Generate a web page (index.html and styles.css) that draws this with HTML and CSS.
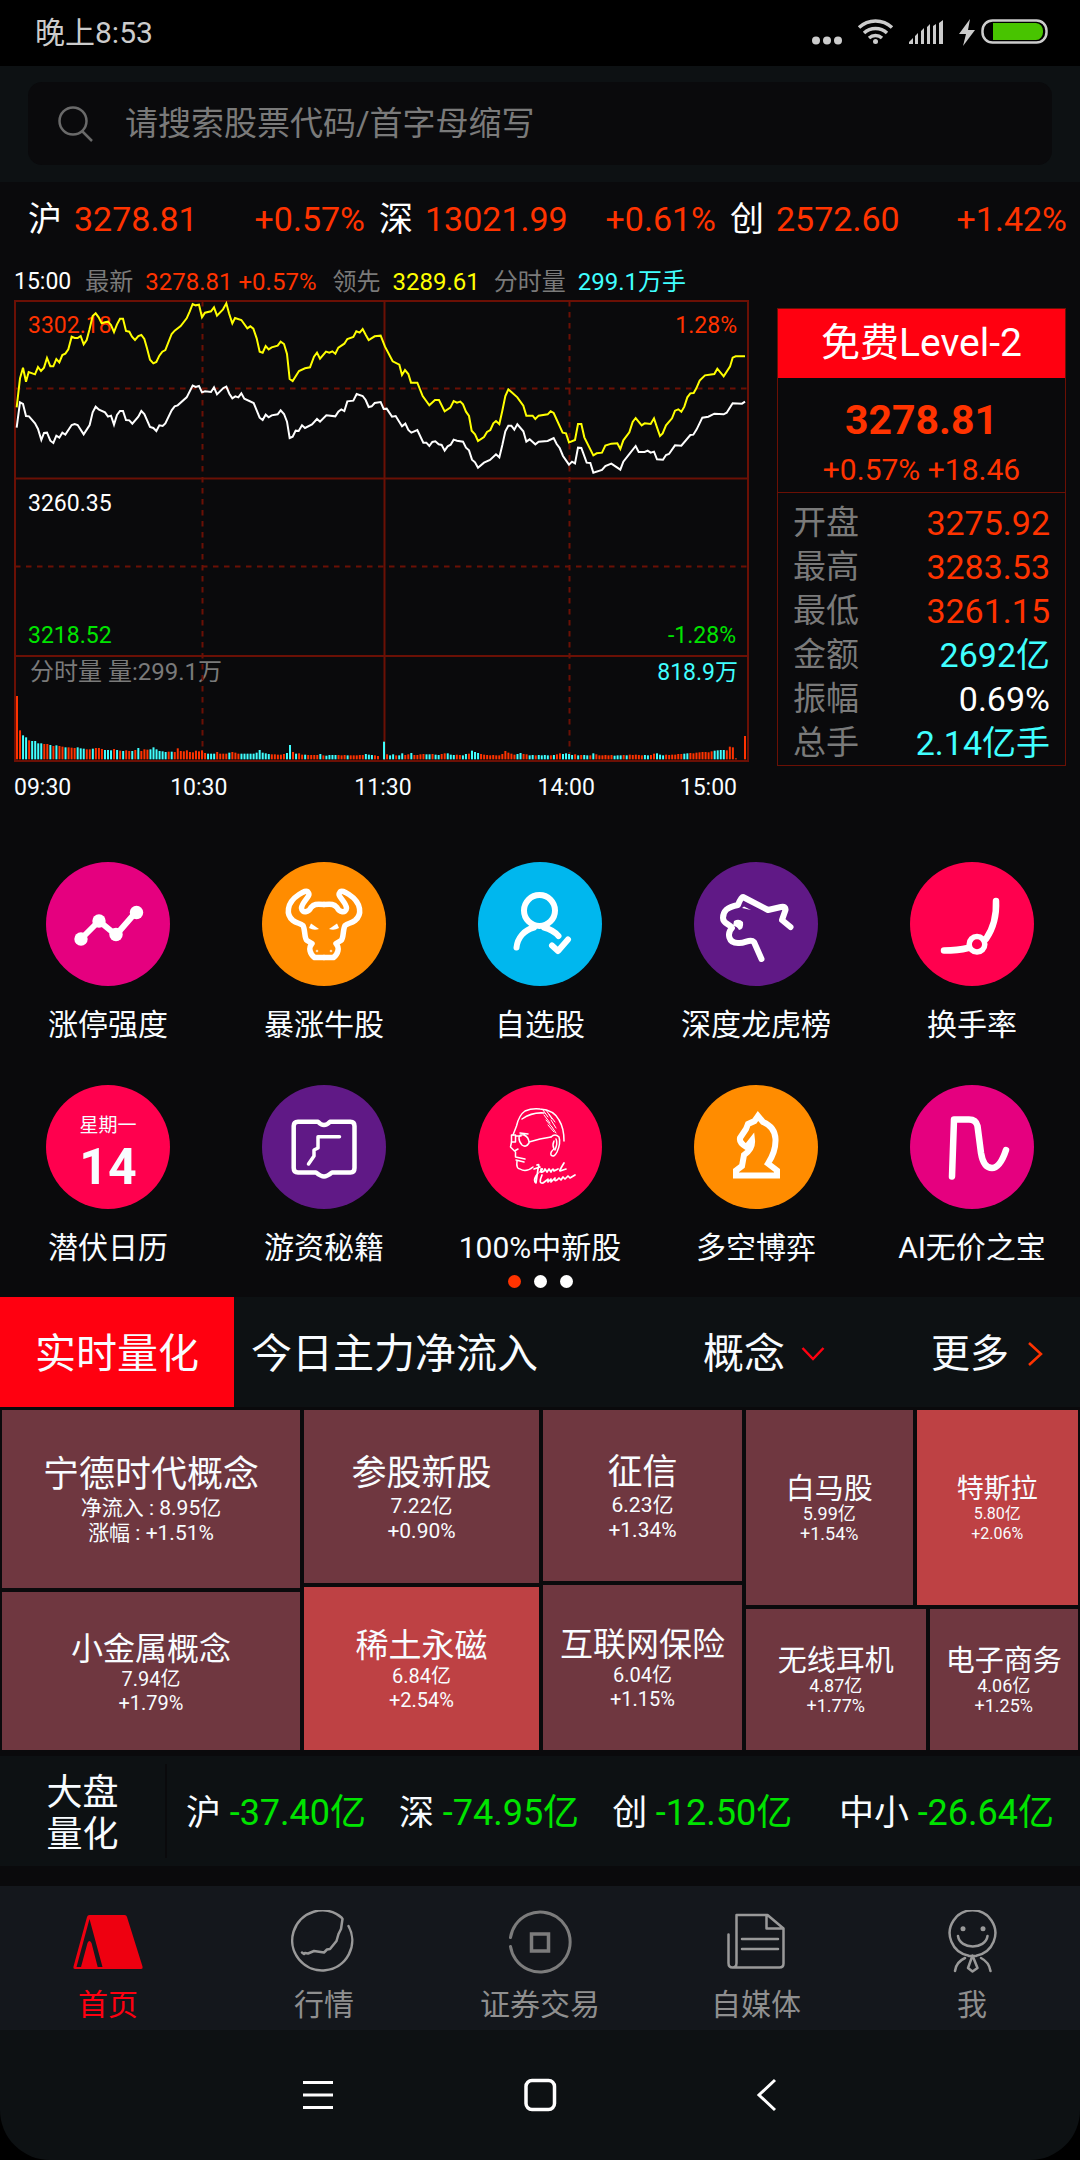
FILE: index.html
```html
<!DOCTYPE html>
<html lang="zh-CN">
<head>
<meta charset="utf-8">
<meta name="viewport" content="width=device-width, initial-scale=1">
<title>首页</title>
<link rel="stylesheet" href="styles.css">
</head>
<body>
<div class="status">
  <span>晚上8:53</span>
  <svg class="status-icons" viewBox="0 0 240 32" aria-hidden="true">
    <g fill="#ccc"><circle cx="6" cy="23.500" r="4"/><circle cx="17" cy="23.500" r="4"/><circle cx="28" cy="23.500" r="4"/></g>
    <g fill="none" stroke="#ccc" stroke-width="3.500"><path d="M49 10.500a24 24 0 0 1 33 0M54 16a17 17 0 0 1 23 0M59 21a10 10 0 0 1 13 0"/></g>
    <circle cx="65.500" cy="24.500" r="2.500" fill="#ccc"/>
    <path fill="#ccc" d="M99 27v-2l4-4v6zM105 27v-8l3-3v11zM111 27V14l3-3v16zM117 27v-17l3-3v20zM123 27V9l3-2v20zM129 27V6l4-3v24z"/>
    <path fill="#ccc" d="M160 2l-11 15h7l-3 12 12-16h-7z"/>
    <rect x="172.500" y="3.500" width="64" height="22" rx="10" fill="none" stroke="#ccc" stroke-width="2.500"/>
    <path fill="#48c400" d="M183 6h43a7 8 0 0 1 7 8.500a7 8 0 0 1-7 8.500h-43z"/>
  </svg>
</div>

<header class="search-bar">
  <label class="search">
    <svg viewBox="0 0 38 38" aria-hidden="true"><circle cx="16" cy="16" r="13.500"/><path d="M25 26l10 10"/></svg>
    <input type="search" aria-label="搜索" placeholder="请搜索股票代码/首字母缩写">
  </label>
</header>

<main>
  <section class="indices">
    <div class="index"><b>沪</b><span>3278.81</span><span class="pct">+0.57%</span></div>
    <div class="index"><b>深</b><span>13021.99</span><span class="pct">+0.61%</span></div>
    <div class="index"><b>创</b><span>2572.60</span><span class="pct">+1.42%</span></div>
  </section>

  <section class="market">
    <div class="chart-col">
      <div class="readout">
        <span class="white clock">15:00</span>
        <span class="pair"><span class="grey">最新</span><span class="red">3278.81 +0.57%</span></span>
        <span class="pair lead"><span class="grey">领先</span><span class="yellow">3289.61</span></span>
        <span class="pair"><span class="grey">分时量</span><span class="cyan">299.1万手</span></span>
      </div>
      <svg class="chart" viewBox="0 0 735 462" role="img" aria-label="分时走势">
        <g class="labels">
          <text x="14" y="33" fill="#ff3300">3302.18</text>
          <text x="14" y="211" fill="#fff">3260.35</text>
          <text x="14" y="343" fill="#00e400">3218.52</text>
          <text x="16" y="380" fill="#7a7a7a" class="volume-label">分时量 量:299.1万</text>
          <text x="723" y="33" text-anchor="end" fill="#ff3300">1.28%</text>
          <text x="722" y="343" text-anchor="end" fill="#00e400">-1.28%</text>
          <text x="724" y="380" text-anchor="end" fill="#40ffff">818.9万</text>
        </g>
        <g class="grid-lines">
          <path d="M1 1H734V461H1zM1 178.500H734M1 356H734M370.500 1V461"/>
          <path stroke-dasharray="5.500 5.500" d="M1 88.500H734M1 266.500H734M188.500 1V461M555.500 1V461"/>
        </g>
        <g id="volume" transform="translate(-14 -10) scale(.333333)"></g>
        <g class="lines" transform="translate(-14 -10) scale(.333333)">
          <polyline stroke="#ff0" points="50,352 60,265 69,233 78,275 86,246 105,253 114,231 123,243 132,233 141,204 151,229 160,229 169,207 178,217 187,195 196,191 205,178 215,140 224,144 233,144 242,138 251,163 260,150 268,120 278,78 287,70 296,82 305,100 315,97 324,95 333,105 342,126 351,103 360,86 369,86 378,123 388,125 396,140 405,150 415,138 424,135 433,147 441,175 450,209 460,220 469,216 478,197 487,185 496,180 515,132 524,122 542,108 560,85 569,65 578,42 587,46 597,44 606,82 615,68 633,64 642,52 651,77 669,58 679,40 687,70 697,100 705,84 724,90 742,115 751,109 760,116 770,145 779,185 788,188 797,168 806,178 815,172 833,167 842,155 852,162 861,192 869,267 878,273 897,243 915,235 930,232 942,200 951,188 960,206 978,185 988,188 997,184 1006,191 1015,173 1033,161 1042,147 1060,141 1069,124 1079,128 1088,117 1097,134 1106,150 1124,139 1142,137 1155,170 1178,214 1198,224 1206,255 1215,240 1225,252 1233,278 1252,278 1268,318 1288,346 1305,330 1317,330 1334,364 1351,353 1361,333 1371,338 1381,335 1389,343 1398,365 1407,378 1415,422 1425,433 1434,453 1452,441 1461,426 1471,420 1480,400 1488,393 1498,402 1507,362 1516,318 1525,298 1535,307 1552,322 1570,347 1579,377 1598,377 1606,387 1616,377 1643,373 1652,364 1661,369 1688,428 1698,430 1707,457 1725,450 1734,402 1744,402 1753,442 1780,496 1790,490 1806,488 1816,467 1834,461 1852,460 1861,477 1870,451 1888,427 1898,396 1907,384 1925,406 1934,400 1952,402 1962,385 1971,412 1980,438 1988,430 1998,406 2016,385 2025,362 2035,358 2044,365 2053,350 2062,322 2071,310 2081,309 2089,295 2099,272 2115,256 2143,252 2152,236 2171,259 2190,230 2198,203 2207,199 2235,199"/>
          <polyline stroke="#fff" points="50,413 60,337 69,342 78,378 87,379 105,400 114,417 124,450 132,429 141,428 151,452 160,459 169,437 178,443 187,428 196,434 215,405 224,402 233,405 251,433 269,405 278,367 287,350 297,359 315,367 324,380 333,377 342,404 351,375 360,363 369,363 378,390 388,391 397,401 415,380 424,363 433,372 450,411 460,414 469,423 478,406 488,408 496,400 515,361 524,349 533,346 560,322 578,287 587,291 597,288 606,307 615,304 633,306 642,292 651,313 670,294 679,290 688,311 697,325 706,319 715,322 724,310 733,326 761,339 779,383 788,390 797,374 806,382 815,376 833,373 842,361 852,372 861,395 869,444 878,440 887,422 896,423 906,406 915,414 936,403 951,387 960,395 979,376 1006,379 1015,365 1024,358 1033,363 1042,334 1060,332 1070,312 1088,318 1097,330 1106,351 1115,349 1124,339 1142,336 1151,357 1160,356 1176,380 1187,378 1206,409 1216,401 1225,420 1234,428 1252,420 1270,458 1279,458 1288,468 1297,456 1306,454 1316,463 1325,465 1334,482 1343,469 1352,464 1361,449 1371,452 1389,455 1398,473 1407,481 1416,509 1425,517 1434,533 1452,518 1470,510 1488,493 1498,502 1507,465 1516,424 1525,407 1534,407 1543,419 1552,403 1570,424 1579,455 1589,448 1606,463 1616,455 1643,453 1661,444 1670,462 1679,474 1689,498 1707,524 1716,515 1725,520 1734,473 1744,474 1760,518 1771,519 1780,548 1806,540 1816,528 1834,521 1861,539 1870,515 1889,491 1907,468 1916,486 1934,486 1943,482 1952,488 1962,485 1971,508 1989,509 1998,495 2007,492 2025,466 2044,467 2071,435 2080,434 2090,418 2107,383 2125,380 2143,371 2171,373 2180,368 2198,340 2226,341 2235,335"/>
        </g>
      </svg>
      <div class="times"><span>09:30</span><span>10:30</span><span>11:30</span><span>14:00</span><span>15:00</span></div>
    </div>

    <aside class="quote">
      <button class="level2" type="button">免费Level-2</button>
      <div class="last"><strong>3278.81</strong><span>+0.57% +18.46</span></div>
      <dl>
        <div><dt>开盘</dt><dd class="red">3275.92</dd></div>
        <div><dt>最高</dt><dd class="red">3283.53</dd></div>
        <div><dt>最低</dt><dd class="red">3261.15</dd></div>
        <div><dt>金额</dt><dd class="cyan">2692亿</dd></div>
        <div><dt>振幅</dt><dd class="white">0.69%</dd></div>
        <div><dt>总手</dt><dd class="cyan">2.14亿手</dd></div>
      </dl>
    </aside>
  </section>

  <nav class="shortcuts" aria-label="功能">
    <a href="#"><span class="disc magenta"><svg viewBox="0 0 124 124"><path stroke-width="6" d="M35 77L53 59L70 73L90 50"/><g fill="#fff" stroke="none"><circle cx="35" cy="77" r="6.700"/><circle cx="53" cy="59" r="6.700"/><circle cx="70" cy="72.500" r="6.700"/><circle cx="90.500" cy="50.500" r="6.700"/></g></svg></span>涨停强度</a>
    <a href="#"><span class="disc orange"><svg viewBox="0 0 124 124"><g id="bull"><path stroke-width="5.500" d="M62 42.500C54 42 52 42 49 45.500C47 50 40 52 39.500 46C40 40 49 34 46.500 31C45 27.500 41 30 37 32.500C24 41 24 53 31 58.500C35 61.500 38 61 41 63.500C43.500 68 42 76 45 78.500L50 81.500C46 86 48 92 52.500 95.500H62"/><path fill="#fff" stroke="none" d="M49 61.500L57 67Q52 69 47 66z"/><circle cx="55" cy="89" r="1.300" fill="#fff" stroke="none" opacity=".7"/></g><use href="#bull" transform="translate(124 0) scale(-1 1)"/></svg></span>暴涨牛股</a>
    <a href="#"><span class="disc blue"><svg viewBox="0 0 124 124"><path stroke-width="6" d="M38.500 85.500C39.500 76 46 68 56 65.500M66 65.500C72 67 77 70 80.500 74M74 83.500L80 89L90 77.500"/><circle cx="61.500" cy="48.500" r="15.500" stroke-width="6"/></svg></span>自选股</a>
    <a href="#"><span class="disc purple"><svg viewBox="0 0 124 124"><path stroke-width="6" d="M96.500 65L88 58L91.500 48Q92 44 87 45L74 48L49 35Q47 35 44 43C33 45 29 49 29 56C29 62 36 62 38 66C33 71 34 81 44 81C51 82 56 76 60 80L67.500 97"/><path fill="#fff" stroke="none" d="M40 59Q45 56 49 60Q50 67 45 68Q43 64 39 64zM48 46L50 44.500L57 48z"/></svg></span>深度龙虎榜</a>
    <a href="#"><span class="disc rose"><svg viewBox="0 0 124 124"><path stroke-width="6.500" d="M86 39Q87 61 76 77M58 86Q48 88.500 34 88.500"/><circle cx="67" cy="82.300" r="7.800" stroke-width="5.500"/></svg></span>换手率</a>
    <a href="#"><span class="disc rose calendar"><span class="weekday">星期一</span><span class="day">14</span></span>潜伏日历</a>
    <a href="#"><span class="disc purple"><svg viewBox="0 0 124 124"><path stroke-width="4.500" d="M36 36.700H56Q59 40 62 40Q65 40 68 36.700H88.500Q92.500 36.700 92.500 41V83Q92.500 87.500 88.500 87.500H70Q65 91.500 62 91.500Q59 91.500 54 87.500H36Q31.700 87.500 31.700 83V41Q31.700 36.700 36 36.700z"/><path stroke-width="3.500" d="M77.500 51.700H56V63L52 65V71L46.500 79"/></svg></span>游资秘籍</a>
    <a href="#"><span class="disc rose"><svg viewBox="0 0 124 124"><g stroke-width="1.500"><path d="M35 50L38.500 41Q41 30 47 26Q54 23 62 24Q76 25 81 35Q86 43 86 56M44 34Q54 27 66 28"/><path d="M33.500 50H37.500V57H33.500zM37.500 51L43 51M41 53Q41 49 46 50Q51 52 51 58Q48 63 44 60Q41 57 41 53zM51 57L62 54L73 52M42 48L50 49"/><path d="M33.500 57L32.500 62L36.500 66L40 64M37.500 67V72L47 74M38 75L46 77M39 76Q38 84 42 84Q48 88 55 82"/><path d="M73 52Q77 48 81 52Q83 58 79 67Q76 73 73 70Q72 67 76 64Q74 60 76 56M78 54Q80 58 77 65"/><path stroke-width="1" d="M65 25L70 32M68 25L74 34M66 30L72 38M71 29L77 37M68 35L74 42M73 35L78 43M70 40L76 47M74 42L78 48"/></g><path stroke-width="1.700" d="M59 80Q62 78 60 84L58 98Q55 96 58 91L60 88M56 84L62 82M62 87Q66 83 63 84Q62 89 66 86L67 84L69 87L71 84L73 87Q75 82 76 86L80 84M86 78Q81 86 82 86L88 84M64 90Q60 99 65 98L69 95M70 94V97L73 94V97L77 93Q76 97 79 95L81 93L83 95L85 92L87 94L90 91L92 93L97 90"/></svg></span>100%中新股</a>
    <a href="#"><span class="disc orange"><svg viewBox="0 0 124 124"><path stroke-width="6" stroke-linejoin="miter" stroke-linecap="butt" d="M64 31L60.500 36L54 39L52 44L46 53Q45 58 52.500 62L58 55Q59 64 50 70L48 81L42 85.500V90.500H83V85.500L74 78.500Q82 66 81.500 54Q81 42 69 37z"/></svg></span>多空博弈</a>
    <a href="#"><span class="disc magenta"><svg viewBox="0 0 124 124"><path stroke-width="6.500" d="M42 91.500L44 34.500H59Q66 34.500 67.500 41L71 68Q73.500 83 82 83Q90 83 96 65"/></svg></span>AI无价之宝</a>
  </nav>
  <div class="dots"><i class="on"></i><i></i><i></i></div>

  <section class="quant">
    <div class="quant-head">
      <h2>实时量化</h2>
      <span class="title">今日主力净流入</span>
      <button class="pick" type="button">概念<svg viewBox="0 0 24 16"><path d="M1.500 2L12 13L22.500 2" stroke="#ff0010"/></svg></button>
      <a class="more" href="#">更多<svg viewBox="0 0 16 26"><path d="M2 2L14 13L2 24" stroke="#ff3300"/></svg></a>
    </div>
    <div class="treemap">
      <div class="stack">
        <a href="#" class="tile s36" style="flex-grow:178"><b>宁德时代概念</b><span>净流入 : 8.95亿</span><span>涨幅 : +1.51%</span></a>
        <a href="#" class="tile s32" style="flex-grow:158"><b>小金属概念</b><span>7.94亿</span><span>+1.79%</span></a>
      </div>
      <div class="stack">
        <a href="#" class="tile s35" style="flex-grow:173"><b>参股新股</b><span>7.22亿</span><span>+0.90%</span></a>
        <a href="#" class="tile s33 hot" style="flex-grow:163"><b>稀土永磁</b><span>6.84亿</span><span>+2.54%</span></a>
      </div>
      <div class="stack">
        <a href="#" class="tile s35" style="flex-grow:171"><b>征信</b><span>6.23亿</span><span>+1.34%</span></a>
        <a href="#" class="tile s33" style="flex-grow:165"><b>互联网保险</b><span>6.04亿</span><span>+1.15%</span></a>
      </div>
      <div class="stack">
        <div class="row" style="flex-grow:195">
          <a href="#" class="tile s29" style="flex-grow:166"><b>白马股</b><span>5.99亿</span><span>+1.54%</span></a>
          <a href="#" class="tile s27 hot" style="flex-grow:161"><b>特斯拉</b><span>5.80亿</span><span>+2.06%</span></a>
        </div>
        <div class="row" style="flex-grow:141">
          <a href="#" class="tile s29" style="flex-grow:179"><b>无线耳机</b><span>4.87亿</span><span>+1.77%</span></a>
          <a href="#" class="tile s29" style="flex-grow:148"><b>电子商务</b><span>4.06亿</span><span>+1.25%</span></a>
        </div>
      </div>
    </div>
  </section>

  <section class="flows">
    <h2>大盘<br>量化</h2>
    <div class="flow-list">
      <span>沪 <em>-37.40亿</em></span>
      <span>深 <em>-74.95亿</em></span>
      <span>创 <em>-12.50亿</em></span>
      <span>中小 <em>-26.64亿</em></span>
    </div>
  </section>
</main>

<nav class="tabs" aria-label="主导航">
  <a href="#" class="active"><svg viewBox="0 0 72 64"><path fill="#ee0010" fill-rule="evenodd" d="M17.500 5H52.500Q54.500 5 55 7L70.500 56.500Q71 59 69 59H3Q1 59 1.500 56.500L15 7Q15.500 5 17.500 5zM17.500 9L4.500 57H9L15.500 33Q17.300 29 19.500 33L25.700 57H30.500z"/></svg>首页</a>
  <a href="#"><svg viewBox="0 0 72 64"><path d="M60.500 16A30 30 0 1 1 53.500 7.500L54.500 9L53 19L50.500 24L48.500 31L42 39L39 39.500L36 42.500L26 41L20 43.500L17 43L16 44L14 42.500"/></svg>行情</a>
  <a href="#"><svg viewBox="0 0 72 64" class="dim"><path d="M6.500 27.500A30 30 0 1 1 6.500 36.500"/><rect x="27.500" y="24" width="17" height="17" stroke-width="3.500"/></svg>证券交易</a>
  <a href="#"><svg viewBox="0 0 72 64"><path d="M8.500 24.500V53Q8.500 57.500 12.500 57.500Q16.500 57.500 16.500 53V5H47.500L63.500 18.500V53.500Q63.500 57.500 59.500 57.500H12.500M46.500 5V18.500H63.500M22 29H58M22 39H58"/></svg>自媒体</a>
  <a href="#"><svg viewBox="0 0 72 64"><path d="M32 45.500A22.800 22.800 0 1 1 41 45.500M22 26C24 40 49.500 40 51.500 26M36.500 45.500L32 58L36.500 61.500L41.500 58zM33 46H40M29 48Q20 52 19 61M45 48Q53 52 54.500 61"/><g fill="#999" stroke="none"><circle cx="27" cy="18.700" r="2.500"/><circle cx="47" cy="18.700" r="2.500"/></g></svg>我</a>
</nav>

<footer class="system">
  <div class="keys">
    <button type="button" aria-label="菜单"><svg viewBox="0 0 40 40"><path stroke-width="3" d="M5 7.500H35M5 20H35M5 32.500H35"/></svg></button>
    <button type="button" aria-label="主页"><svg viewBox="0 0 40 40"><rect x="6" y="5.500" width="28.500" height="29" rx="6" stroke-width="3.500"/></svg></button>
    <button type="button" aria-label="返回"><svg viewBox="0 0 40 40"><path stroke-width="3" d="M33 5L17 20L33 35"/></svg></button>
  </div>
</footer>
<script src="chart.js"></script>
</body>
</html>
```

FILE: styles.css
```css
* { box-sizing: border-box; margin: 0; padding: 0; }

body {
  background: #0a0a0c;
  color: #f8fcff;
  font-family: Roboto, "Noto Sans CJK SC", sans-serif;
}

a { color: inherit; text-decoration: none; }
button { border: 0; background: none; color: inherit; font: inherit; cursor: pointer; }
b, h2 { font-weight: 400; }

.red { color: #ff3300; }
.cyan { color: #40ffff; }
.yellow { color: #ffff00; }
.white { color: #fff; }
.grey { color: #7a7a7a; }

.status {
  display: flex;
  justify-content: space-between;
  align-items: center;
  height: 66px;
  padding: 0 30px 0 35px;
  background: #000;
  color: #ccc;
  font-size: 30px;
  line-height: 38px;
}
.status-icons { width: 240px; height: 32px; }

.search-bar { padding: 16px 28px 17px; background: #0d1113; }
.search {
  display: flex;
  align-items: center;
  gap: 30px;
  height: 83px;
  padding: 0 29px;
  border-radius: 14px;
  background: #0a0a0c;
}
.search svg { flex: none; width: 38px; height: 38px; fill: none; stroke: #6a6a6a; stroke-width: 2.5; }
.search input {
  flex: 1;
  min-width: 0;
  border: 0;
  outline: 0;
  background: none;
  color: #fff;
  font: 33px Roboto, "Noto Sans CJK SC", sans-serif;
}
.search input::placeholder { color: #7a7a7a; opacity: 1; }

.indices {
  display: grid;
  grid-template-columns: repeat(3, 1fr);
  gap: 14px;
  padding: 17px 13px 0 28px;
  font-size: 34px;
  line-height: 40px;
  color: #ff3300;
}
.index { display: flex; gap: 12px; }
.index b { color: #fff; }
.pct { margin-left: auto; }

.market {
  display: grid;
  grid-template-columns: 735fr 289fr;
  gap: 28px;
  padding: 28px 14px 0;
  align-items: start;
}
.readout {
  display: flex;
  gap: 14px;
  padding-bottom: 3px;
  font-size: 24px;
  line-height: 30px;
  white-space: nowrap;
}
.clock { font-size: 23px; }
.pair { display: flex; gap: 12px; }
.lead { padding-left: 2px; }
.chart { display: block; width: 100%; height: auto; }
.labels { font-size: 23px; }
.volume-label { font-size: 24px; }
.grid-lines { fill: none; stroke: #6b1005; stroke-width: 2; }
.lines { fill: none; stroke-width: 6; }
.times {
  display: grid;
  grid-template-columns: 156fr 184fr 183fr 142fr auto;
  padding: 11px 12px 0 0;
  font-size: 23px;
  line-height: 30px;
}

.quote { margin-top: 41px; border: 1px solid #6b1005; }
.level2 {
  display: block;
  width: 100%;
  height: 69px;
  background: #ff0010;
  color: #fff;
  font-size: 39px;
  line-height: 69px;
}
.last {
  display: flex;
  flex-direction: column;
  gap: 8px;
  padding: 18px 0 4px;
  border-bottom: 1px solid #6b1005;
  color: #ff3300;
  text-align: center;
}
.last strong { font-size: 41px; line-height: 48px; }
.last span { font-size: 30px; line-height: 36px; }
.quote dl { display: grid; gap: 8px; padding: 12px 15px 4px; font-size: 33px; line-height: 36px; }
.quote dl div { display: flex; justify-content: space-between; }
.quote dt { color: #7a7a7a; }
.quote dd { font-size: 34px; }

.shortcuts {
  display: grid;
  grid-template-columns: repeat(5, 1fr);
  row-gap: 42px;
  padding-top: 59px;
  font-size: 30px;
  line-height: 36px;
}
.shortcuts a { display: flex; flex-direction: column; align-items: center; gap: 21px; }
.disc {
  display: flex;
  flex-direction: column;
  align-items: center;
  justify-content: center;
  width: 124px;
  height: 124px;
  border-radius: 50%;
}
.disc svg { width: 124px; height: 124px; fill: none; stroke: #fff; stroke-linecap: round; stroke-linejoin: round; }
.magenta { background: #e5007f; }
.orange { background: #ff8c00; }
.blue { background: #00b7ee; }
.purple { background: #601986; }
.rose { background: #ff004e; }
.calendar { padding-top: 18px; }
.weekday { font-size: 19px; line-height: 22px; }
.day { font-size: 50px; line-height: 60px; font-weight: 700; }

.dots { display: flex; justify-content: center; gap: 13px; padding: 9px 0; }
.dots i { width: 13px; height: 13px; border-radius: 50%; background: #fff; }
.dots .on { background: #ff3300; }

.quant-head {
  display: flex;
  align-items: center;
  height: 110px;
  background: #0d1113;
  font-size: 41px;
  line-height: 106px;
}
.quant-head h2 {
  width: 234px;
  padding-top: 4px;
  font-size: 41px;
  text-align: center;
  background: #ff0010;
}
.title { padding: 4px 0 0 17px; }
.pick { display: flex; align-items: center; gap: 16px; margin-left: auto; padding-top: 3px; }
.more { display: flex; align-items: center; gap: 18px; margin: 0 37px 0 106px; padding-top: 3px; font-size: 39px; }
.quant-head svg { fill: none; stroke-width: 2.5; }
.pick svg { width: 24px; height: 16px; }
.more svg { width: 16px; height: 26px; }

.treemap {
  display: grid;
  grid-template-columns: 298fr 235fr 199fr 332fr;
  gap: 4px;
  height: 349px;
  padding: 3px 2px 6px;
}
.stack { display: flex; flex-direction: column; gap: 4px; min-width: 0; }
.row { display: flex; gap: 4px; flex-basis: 0; }
.tile {
  display: flex;
  flex-direction: column;
  align-items: center;
  justify-content: center;
  flex-basis: 0;
  min-width: 0;
  padding-top: 4px;
  background: #6f3740;
  white-space: nowrap;
}
.hot { background: #be4144; }
.s36, .s35 { font-size: 21px; line-height: 25px; }
.s36 b { font-size: 36px; line-height: 41px; }
.s35 b { font-size: 35px; line-height: 41px; }
.s33, .s32 { font-size: 20px; line-height: 24px; }
.s33 b { font-size: 33px; line-height: 36px; }
.s32 b { font-size: 32px; line-height: 36px; }
.s29, .s27 { padding-top: 2px; line-height: 20px; }
.s29 { font-size: 18px; }
.s29 b { font-size: 29px; line-height: 30px; }
.s27 { font-size: 16px; }
.s27 b { font-size: 27px; line-height: 30px; }

.flows {
  display: flex;
  align-items: center;
  min-height: 110px;
  margin-bottom: 20px;
  background: #0d1113;
}
.flows h2 {
  width: 167px;
  padding: 8px 0 2px;
  border-right: 2px solid #0a0a0c;
  font-size: 36px;
  line-height: 42px;
  text-align: center;
}
.flow-list {
  flex: 1;
  display: flex;
  gap: 33px;
  padding: 4px 26px 0 19px;
  font-size: 35px;
  line-height: 42px;
  white-space: nowrap;
}
.flow-list span:last-child { margin-left: auto; }
.flow-list em { font-size: 36px; font-style: normal; color: #00e400; }

.tabs {
  display: grid;
  grid-template-columns: repeat(5, 1fr);
  padding: 24px 0 7px;
  background: #14171c;
  color: #8f8f8f;
  font-size: 30px;
  line-height: 36px;
}
.tabs a { display: flex; flex-direction: column; align-items: center; gap: 13px; }
.tabs .active { color: #ff0010; }
.tabs svg { width: 72px; height: 64px; fill: none; stroke: #999; stroke-width: 2.5; stroke-linecap: round; stroke-linejoin: round; }
.tabs .active svg { stroke: none; }
.tabs .dim { stroke: #7c7c7c; stroke-width: 3; stroke-linejoin: miter; }

.system { background: #000; }
.keys {
  display: flex;
  justify-content: center;
  align-items: center;
  height: 130px;
  border-radius: 0 0 50px 50px;
  background: #0d1113;
}
.keys button { width: 222px; height: 130px; }
.keys svg { width: 40px; height: 40px; fill: none; stroke: #fff; vertical-align: middle; }
```

FILE: chart.js
```js
// Minute-by-minute volume, one bar per minute.
const heights = [
  190, 87, 72, 66, 57, 55, 55, 48, 48, 46, 46, 43, 40, 42, 40, 38, 36, 36, 35, 34, 36, 33, 32, 30, 30,
  32, 34, 34, 31, 28, 28, 27, 31, 28, 26, 25, 27, 25, 25, 28, 34, 25, 30, 29, 30, 36, 30, 25, 24, 22,
  23, 23, 22, 33, 25, 24, 27, 22, 21, 26, 24, 27, 19, 17, 17, 17, 22, 17, 17, 17, 20, 22, 20, 17, 17,
  17, 17, 17, 17, 20, 28, 20, 18, 16, 15, 15, 14, 14, 16, 19, 43, 22, 17, 18, 14, 14, 13, 13, 13, 13,
  16, 12, 11, 13, 13, 13, 13, 12, 13, 12, 12, 12, 12, 13, 13, 16, 14, 13, 12, 10, 0, 53, 15, 12, 15,
  12, 12, 18, 13, 15, 19, 13, 13, 15, 16, 15, 15, 16, 14, 13, 16, 18, 18, 14, 13, 14, 13, 12, 16, 17,
  26, 22, 19, 16, 14, 13, 12, 13, 12, 12, 16, 25, 20, 17, 14, 16, 19, 16, 15, 12, 13, 12, 13, 12, 13,
  12, 12, 13, 15, 18, 16, 18, 16, 13, 15, 12, 13, 13, 12, 12, 18, 15, 12, 12, 13, 12, 13, 11, 12, 12,
  13, 12, 14, 13, 14, 13, 12, 13, 12, 13, 17, 18, 14, 12, 14, 13, 14, 14, 16, 16, 17, 18, 19, 18, 20,
  21, 22, 22, 21, 24, 26, 27, 28, 28, 27, 38, 36, 3, 0, 0, 70
];
// "r" rising, "c" falling; 25 minutes to a row.
const tones = [
  "rrccrccccrrcrcrrcrrrcccrr",
  "crrrcccrcrcrrcrcrrrcccccc",
  "rcrrrrrrrrrrrcccrrrrcrrrc",
  "cccccccccrrrrrccrcrrcrrrr",
  "crccccrrrcrrrrrcccrrrcrcc",
  "rccrrcrrrrccrccrrcccrrccr",
  "cccrrrrrrrrrrrrccrrccrccc",
  "crcrrccccrcrccrcrrrrrrccc",
  "rcrrrrrccrrcccrrrrrrccrrr",
  "rrrrrccccrrrrccr"
].join("");

const base = 1408;
const step = 9.1;
const group = document.getElementById("volume");
heights.forEach((h, i) => {
  const bar = document.createElementNS("http://www.w3.org/2000/svg", "rect");
  bar.setAttribute("x", 48 + i * step);
  bar.setAttribute("y", base - h);
  bar.setAttribute("width", 6);
  bar.setAttribute("height", h);
  bar.setAttribute("fill", tones[i] === "c" ? "#40ffff" : "#ff3300");
  group.append(bar);
});
```
